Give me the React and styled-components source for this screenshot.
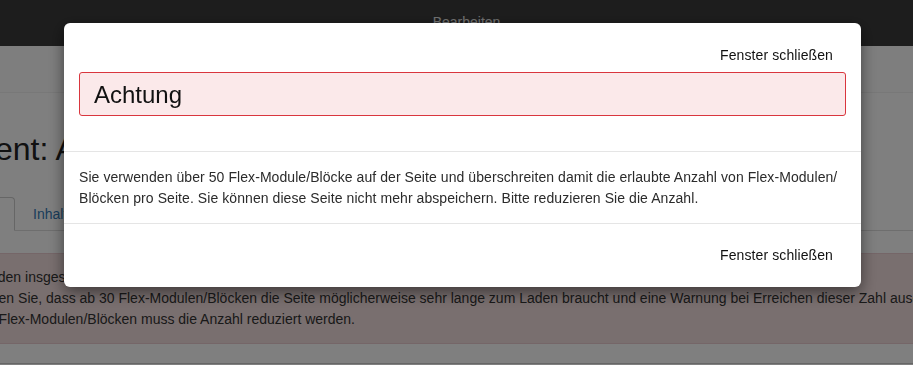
import React from "react";
import styled, { createGlobalStyle } from "styled-components";

const Global = createGlobalStyle`
  html, body {
    margin: 0;
    padding: 0;
    background: #ffffff;
    font-family: "Liberation Sans", Arial, sans-serif;
    font-size: 14px;
    color: #333;
    overflow: hidden;
  }
`;

const Page = styled.div`
  width: 913px;
  height: 365px;
  overflow: hidden;
  background: #fff;
`;

const Navbar = styled.div`
  height: 46px;
  background: #3b3b3b;
  display: flex;
  align-items: center;
  justify-content: center;
  padding-left: 20px;
  color: #e6e6e6;
  font-size: 14px;
  line-height: 20px;
  padding-bottom: 2px;
  box-sizing: border-box;
`;

const SubBar = styled.div`
  height: 47px;
  background: #fcfcfc;
  border-bottom: 1px solid #f0f0f0;
  box-sizing: border-box;
`;

const Content = styled.div`
  margin-left: -61px;
  width: 1100px;
`;

const Heading = styled.h1`
  margin: 39px 0 30px -17px;
  font-size: 32px;
  font-weight: 400;
  line-height: 35px;
  color: #222;
`;

const Tabs = styled.ul`
  list-style: none;
  margin: 0;
  padding: 0;
  display: flex;
  border-bottom: 1px solid #ddd;
  height: 33px;
`;

const Tab = styled.li`
  margin-right: 2px;
  margin-bottom: -1px;
  padding: 6px ${(p) => (p.active ? "16px" : "15px")};
  line-height: 20px;
  border: 1px solid ${(p) => (p.active ? "#ccc" : "transparent")};
  border-bottom-color: ${(p) => (p.active ? "#fff" : "transparent")};
  border-radius: 4px 4px 0 0;
  background: ${(p) => (p.active ? "#fff" : "transparent")};
  color: ${(p) => (p.active ? "#555" : "#337ab7")};
`;

const PageAlert = styled.div`
  margin-top: 22px;
  padding: 13px 15px;
  background: #f2dede;
  border: 1px solid #ebccd1;
  color: #333;
  line-height: 21px;
  font-size: 14px;
`;

const PageFooter = styled.div`
  margin-top: 19px;
  border-top: 1px solid #ccc;
  height: 20px;
`;

const Backdrop = styled.div`
  position: fixed;
  inset: 0;
  background: rgba(0, 0, 0, 0.5);
`;

const Modal = styled.div`
  position: fixed;
  top: 23px;
  left: 64px;
  width: 797px;
  background: #fff;
  border-radius: 6px;
  box-shadow: 0 5px 15px rgba(0, 0, 0, 0.5);
  overflow: hidden;
`;

const Header = styled.div`
  padding: 15px 15px 35px;
  border-bottom: 1px solid #e5e5e5;
  display: flex;
  flex-direction: column;
`;

const CloseButton = styled.button`
  align-self: flex-end;
  background: transparent;
  border: 1px solid transparent;
  padding: 6px 12px;
  font-family: "Liberation Sans", Arial, sans-serif;
  font-size: 14px;
  line-height: 20px;
  letter-spacing: 0.1px;
  color: #111;
  cursor: pointer;
`;

const Warning = styled.div`
  border: 1px solid #d9363e;
  background: #fbe9ea;
  border-radius: 3px;
  padding: 9px 14px 7px;
  font-size: 24px;
  line-height: 26px;
  color: #111;
`;

const Body = styled.div`
  padding: 15px;
  line-height: 20.5px;
  font-size: 14px;
  letter-spacing: 0.07px;
  color: #2b2b2b;
  border-bottom: 1px solid #e5e5e5;
`;

const Footer = styled.div`
  padding: 14px 15px 15px;
  display: flex;
  justify-content: flex-end;
`;

export default function App() {
  return (
    <>
      <Global />
      <Page>
        <Navbar>Bearbeiten</Navbar>
        <SubBar />
        <Content>
          <Heading>Element: Allgemein</Heading>
          <Tabs>
            <Tab active>Layout</Tab>
            <Tab>Inhalt</Tab>
          </Tabs>
          <PageAlert>
            Es wurden insgesamt 54 Flex-Module/Blöcke auf dieser Seite angelegt.
            <br />
            Beachten Sie, dass ab 30 Flex-Modulen/Blöcken die Seite möglicherweise sehr lange zum Laden braucht und eine Warnung bei Erreichen dieser Zahl ausgegeben wird.
            <br />
            Bei 50 Flex-Modulen/Blöcken muss die Anzahl reduziert werden.
          </PageAlert>
          <PageFooter />
        </Content>
      </Page>
      <Backdrop />
      <Modal>
        <Header>
          <CloseButton>Fenster schließen</CloseButton>
          <Warning>Achtung</Warning>
        </Header>
        <Body>
          Sie verwenden über 50 Flex-Module/Blöcke auf der Seite und überschreiten damit die erlaubte Anzahl von Flex-Modulen/
          <br />
          Blöcken pro Seite. Sie können diese Seite nicht mehr abspeichern. Bitte reduzieren Sie die Anzahl.
        </Body>
        <Footer>
          <CloseButton>Fenster schließen</CloseButton>
        </Footer>
      </Modal>
    </>
  );
}
